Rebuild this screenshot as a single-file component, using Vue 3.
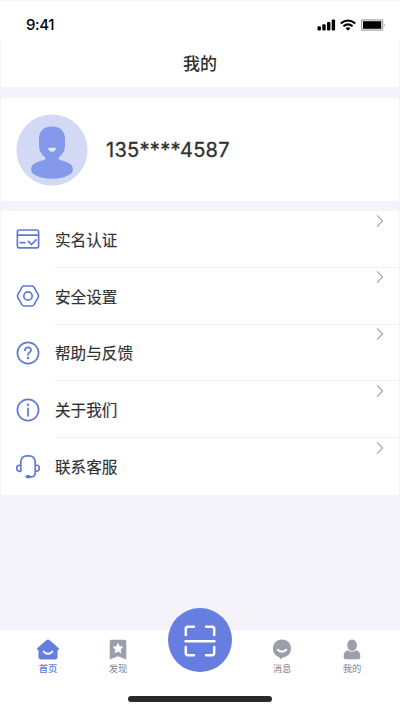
<script setup>
const items = [
  { key: 'verify', label: '实名认证' },
  { key: 'security', label: '安全设置' },
  { key: 'help', label: '帮助与反馈' },
  { key: 'about', label: '关于我们' },
  { key: 'service', label: '联系客服' },
]
</script>

<template>
  <div class="screen">
    <div class="status">
      <span class="time">9:41</span>
      <div class="indicators">
        <svg class="signal" width="19" height="12" viewBox="0 0 19 12">
          <rect x="0.5" y="7.3" width="3.4" height="4.2" rx="1" />
          <rect x="5.3" y="5.2" width="3.4" height="6.3" rx="1" />
          <rect x="10" y="3" width="3.4" height="8.5" rx="1" />
          <rect x="14.7" y="0.5" width="3.4" height="11" rx="1" />
        </svg>
        <svg class="wifi" width="16" height="12" viewBox="0 0 16 12">
          <path d="M0.7 4.5Q8 -1.6 15.3 4.5M3.4 7.2Q8 3.5 12.6 7.2" fill="none" stroke="#000" stroke-width="2" />
          <path d="M5.5 9.1Q8 7.2 10.5 9.1L8 11.7Z" />
        </svg>
        <svg class="battery" width="25" height="12" viewBox="0 0 25 12">
          <rect x="0.6" y="0.9" width="21" height="10.2" rx="0.7" fill="#fff" stroke="#a5a5a5" stroke-width="1.3" />
          <rect x="2" y="2.2" width="18.2" height="7.6" />
          <path d="M23 4.3Q24.6 6 23 7.7Z" fill="#aaa" />
        </svg>
      </div>
    </div>

    <header class="title">我的</header>

    <section class="profile">
      <svg class="avatar" width="72" height="72" viewBox="0 0 72 72">
        <circle cx="36" cy="36" r="35.6" fill="#d1d9f5" />
        <path d="M36 12.4C44 12.4 49 17 49 24.5V31C49 36.5 46.5 41 42.8 43.2C42 45 43 45.8 45.5 46.4C52 47.8 57 50.5 57 55.3C57 61 47.5 64.7 36 64.7S15 61 15 55.3C15 50.5 20 47.8 26.5 46.4C29 45.8 30 45 29.2 43.2C25.5 41 23 36.5 23 31V24.5C23 17 28 12.4 36 12.4Z" fill="#8499e9" />
        <path d="M32.2 33.8H40C40 39 32.2 39 32.2 33.8Z" fill="#e2e8fd" />
      </svg>
      <span class="phone">135****4587</span>
    </section>

    <section class="menu">
      <div v-for="item in items" :key="item.key" class="row">
        <svg class="icon" width="24" height="24" viewBox="0 0 24 24">
          <template v-if="item.key === 'verify'">
            <rect x="1.4" y="3" width="21.2" height="17.8" rx="1.7" />
            <path d="M1.5 8.2H22.5M4.2 15.6H8.8M12.4 14.4L15.5 17.5L20 12.8" />
          </template>
          <template v-else-if="item.key === 'security'">
            <path d="M8 2H16Q17.2 2 17.9 3.1L22.2 10.7Q22.8 12 22.2 13.3L17.9 20.9Q17.2 22 16 22H8Q6.8 22 6.1 20.9L1.8 13.3Q1.2 12 1.8 10.7L6.1 3.1Q6.8 2 8 2Z" />
            <circle cx="12" cy="12" r="4.2" />
          </template>
          <template v-else-if="item.key === 'help'">
            <circle cx="12" cy="12" r="10.6" />
            <path d="M8.9 9.4C9.1 5.2 15.4 5.5 15 9.3C14.8 11.4 12 11.4 12 14" />
            <circle cx="12" cy="17" r="1.2" class="solid" />
          </template>
          <template v-else-if="item.key === 'about'">
            <circle cx="12" cy="12" r="10.6" />
            <path d="M12 10.3V17.8" />
            <circle cx="12" cy="6.8" r="1.25" class="solid" />
          </template>
          <template v-else>
            <path d="M4.8 10C-0.8 10 -0.8 16.4 4.8 16.4V7.6C4.8 3.2 7 0.9 11.2 0.9H12.8C17 0.9 19.2 3.2 19.2 7.6V16.4C24.8 16.4 24.8 10 19.2 10M19.2 16.4V18C19.2 20.5 17.8 21.8 15.3 21.8H13" />
            <rect x="9.6" y="20.1" width="5" height="3.2" rx="1.6" class="solid" />
          </template>
        </svg>
        <div class="body">
          <span class="label">{{ item.label }}</span>
          <svg class="chevron" width="8" height="14" viewBox="0 0 8 14">
            <path d="M1 1.3L6.6 7L1 12.7" />
          </svg>
        </div>
      </div>
    </section>

    <nav class="tabs">
      <div class="tab active">
        <svg width="24" height="22" viewBox="0 0 24 22">
          <path d="M10.5 1.1Q12 0 13.5 1.1L22.5 9Q23.7 11.2 21.5 11.2V18Q21.5 20.4 19.2 20.4H4.8Q2.5 20.4 2.5 18V11.2Q0.3 11.2 1.5 9Z" />
          <path d="M7.7 12.6Q12 17 16.3 12.6" class="smile" />
        </svg>
        <span>首页</span>
      </div>
      <div class="tab">
        <svg width="24" height="22" viewBox="0 0 24 22">
          <path d="M5.5 0.8H18.5Q20.3 0.8 20.3 2.6V20.5L12 17.2L3.7 20.5V2.6Q3.7 0.8 5.5 0.8Z" />
          <path d="M12 3.8L13.7 7.2L17.5 7.8L14.7 10.5L15.4 14.2L12 12.4L8.6 14.2L9.3 10.5L6.5 7.8L10.3 7.2Z" class="star" />
        </svg>
        <span>发现</span>
      </div>
      <div class="scan">
        <svg width="32" height="32" viewBox="0 0 32 32">
          <path d="M1.8 10V4Q1.8 1.8 4 1.8H10M22 1.8H28Q30.2 1.8 30.2 4V10M30.2 22V28Q30.2 30.2 28 30.2H22M10 30.2H4Q1.8 30.2 1.8 28V22M1.5 16.2H30.5" />
        </svg>
      </div>
      <div class="tab">
        <svg width="24" height="22" viewBox="0 0 24 22">
          <path d="M12 0.6C17.3 0.6 21 4.3 21 9.4C21 14.4 17.8 17.4 13.3 18.2L9.8 20.6L9.6 18.2C5.7 17.2 3 14 3 9.4C3 4.3 6.7 0.6 12 0.6Z" />
          <path d="M7.7 10.7Q12 14.6 16.3 10.7" class="smile" />
        </svg>
        <span>消息</span>
      </div>
      <div class="tab">
        <svg width="24" height="22" viewBox="0 0 24 22">
          <rect x="7.4" y="0.6" width="9.4" height="11.3" rx="4.7" />
          <path d="M7.8 11.3Q12 14.4 16.2 11.3Q20.3 12.5 20.3 17V18.3Q20.3 20.2 18.3 20.2H5.7Q3.7 20.2 3.7 18.3V17Q3.7 12.5 7.8 11.3Z" />
        </svg>
        <span>我的</span>
      </div>
      <div class="home-bar"></div>
    </nav>
  </div>
</template>

<style>
body {
  margin: 0;
}
</style>

<style scoped>
.screen {
  box-sizing: border-box;
  width: 400px;
  height: 710px;
  display: flex;
  flex-direction: column;
  overflow: hidden;
  background: #f3f3f9;
  color: #303030;
  font-family: "Noto Sans CJK SC", sans-serif;
}
.status {
  box-sizing: border-box;
  height: 40px;
  display: flex;
  align-items: center;
  justify-content: space-between;
  padding: 8px 14px 0 26px;
  background: #fff;
  border-top: 1px solid #f8f8fa;
}
.time {
  color: #000;
  font: 500 15px/20px Inter, sans-serif;
  letter-spacing: -0.4px;
}
.indicators {
  display: flex;
  gap: 3px;
}
.signal {
  margin-right: 1px;
}
.battery {
  margin-left: 2px;
}
.title {
  height: 47px;
  margin: 0 1px;
  background: #fff;
  text-align: center;
  font-size: 17px;
  font-weight: 500;
  line-height: 46px;
}
.profile {
  height: 103px;
  margin: 11px 1px 10px;
  display: flex;
  align-items: center;
  gap: 18px;
  padding-left: 15px;
  box-sizing: border-box;
  background: #fff;
}
.phone {
  font: 400 20px/28px Inter, sans-serif;
  letter-spacing: 0.3px;
  -webkit-text-stroke: 0.3px #303030;
}
.menu {
  height: 284px;
  margin: 0 1px;
  display: grid;
  grid-template-rows: repeat(5, 1fr);
  background: #fff;
}
.row {
  display: flex;
  align-items: center;
  gap: 15px;
  padding-left: 15px;
}
.icon {
  fill: none;
  stroke: #5f79d6;
  stroke-width: 1.7;
  stroke-linecap: round;
  stroke-linejoin: round;
}
.icon .solid {
  fill: #5f79d6;
  stroke: none;
}
.body {
  box-sizing: border-box;
  flex: 1;
  height: 100%;
  display: flex;
  justify-content: space-between;
  padding-right: 15px;
  border-bottom: 1px solid #f3f3f6;
}
.row:last-child .body {
  border-bottom-color: transparent;
}
.label {
  align-self: center;
  font-size: 15.6px;
  line-height: 24px;
  -webkit-text-stroke: 0.15px #303030;
}
.chevron {
  margin-top: 2.5px;
  fill: none;
  stroke: #a6a6a6;
  stroke-width: 1.2;
}
.tabs {
  position: relative;
  box-sizing: border-box;
  height: 80px;
  margin-top: auto;
  display: grid;
  grid-template-columns: 70px 70px 94px 70px 70px;
  align-items: start;
  padding: 9px 13px 0;
  background: #fff;
}
.tab {
  display: flex;
  flex-direction: column;
  align-items: center;
  color: #81858f;
  font-size: 9.3px;
  line-height: 14px;
}
.tab svg {
  fill: #9a9fab;
}
.tab.active {
  color: #5d78dc;
  font-weight: 500;
}
.tab.active svg {
  fill: #637ee0;
}
.tab .smile {
  fill: none;
  stroke: #fff;
  stroke-width: 2;
  stroke-linecap: round;
}
.tab .star {
  fill: #fff;
}
.scan {
  width: 64px;
  height: 64px;
  margin: -31px auto 0;
  display: flex;
  align-items: center;
  justify-content: center;
  border-radius: 50%;
  background: #657edf;
}
.scan svg {
  margin-top: 1px;
  fill: none;
  stroke: #fff;
  stroke-width: 2.5;
  stroke-linecap: round;
}
.scan {
  margin-top: -31px;
}
.home-bar {
  position: absolute;
  left: 128px;
  bottom: 8px;
  width: 144px;
  height: 6px;
  border-radius: 3px;
  background: #292929;
}
</style>
